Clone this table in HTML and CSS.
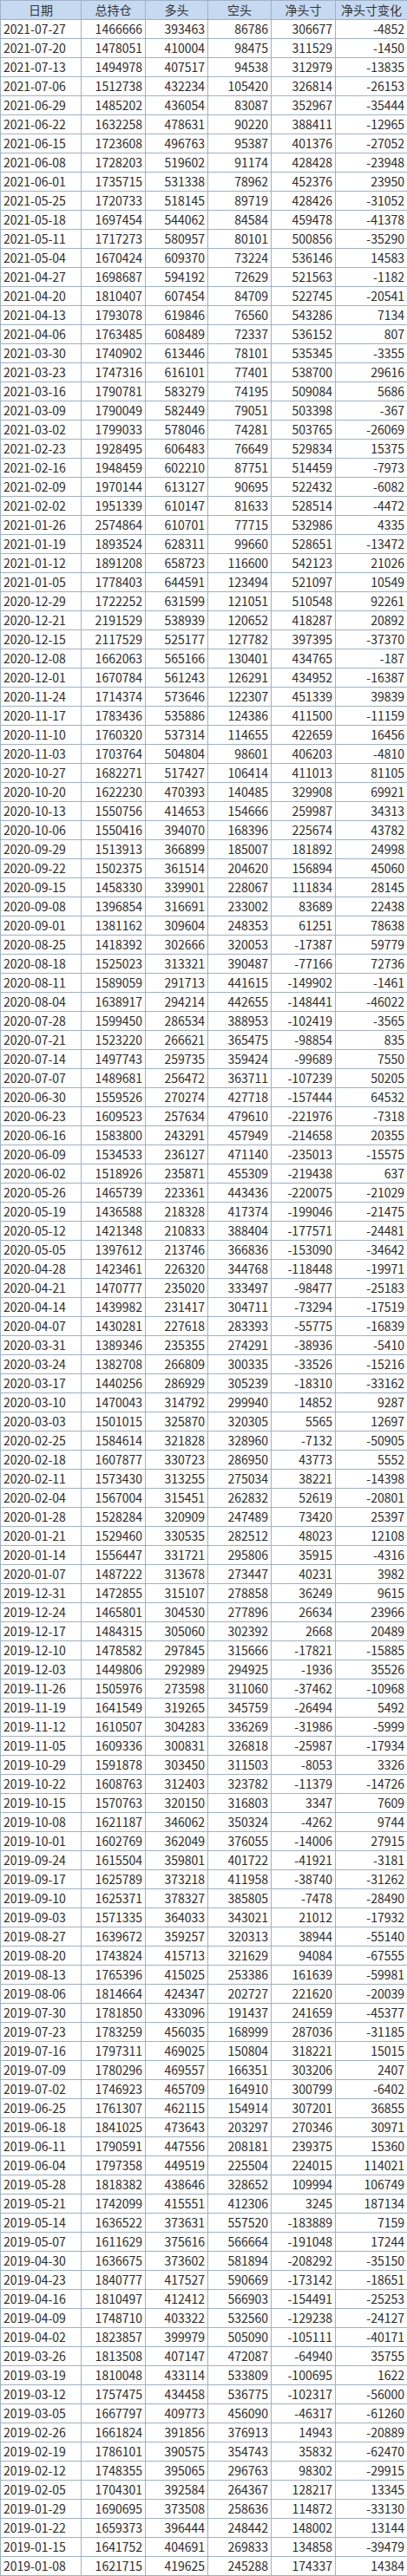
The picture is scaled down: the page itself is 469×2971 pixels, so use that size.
FILE: index.html
```html
<!DOCTYPE html>
<html lang="zh-CN">
<head>
<meta charset="utf-8">
<title>持仓数据</title>
<link rel="stylesheet" href="styles.css">
</head>
<body>
<table class="grid">
<colgroup>
<col class="c-date"><col class="c-total"><col class="c-long"><col class="c-short"><col class="c-net"><col class="c-chg">
</colgroup>
<thead>
<tr><th>日期</th><th>总持仓</th><th>多头</th><th>空头</th><th>净头寸</th><th>净头寸变化</th></tr>
</thead>
<tbody>
<tr><td>2021-07-27</td><td>1466666</td><td>393463</td><td>86786</td><td>306677</td><td>-4852</td></tr>
<tr><td>2021-07-20</td><td>1478051</td><td>410004</td><td>98475</td><td>311529</td><td>-1450</td></tr>
<tr><td>2021-07-13</td><td>1494978</td><td>407517</td><td>94538</td><td>312979</td><td>-13835</td></tr>
<tr><td>2021-07-06</td><td>1512738</td><td>432234</td><td>105420</td><td>326814</td><td>-26153</td></tr>
<tr><td>2021-06-29</td><td>1485202</td><td>436054</td><td>83087</td><td>352967</td><td>-35444</td></tr>
<tr><td>2021-06-22</td><td>1632258</td><td>478631</td><td>90220</td><td>388411</td><td>-12965</td></tr>
<tr><td>2021-06-15</td><td>1723608</td><td>496763</td><td>95387</td><td>401376</td><td>-27052</td></tr>
<tr><td>2021-06-08</td><td>1728203</td><td>519602</td><td>91174</td><td>428428</td><td>-23948</td></tr>
<tr><td>2021-06-01</td><td>1735715</td><td>531338</td><td>78962</td><td>452376</td><td>23950</td></tr>
<tr><td>2021-05-25</td><td>1720733</td><td>518145</td><td>89719</td><td>428426</td><td>-31052</td></tr>
<tr><td>2021-05-18</td><td>1697454</td><td>544062</td><td>84584</td><td>459478</td><td>-41378</td></tr>
<tr><td>2021-05-11</td><td>1717273</td><td>580957</td><td>80101</td><td>500856</td><td>-35290</td></tr>
<tr><td>2021-05-04</td><td>1670424</td><td>609370</td><td>73224</td><td>536146</td><td>14583</td></tr>
<tr><td>2021-04-27</td><td>1698687</td><td>594192</td><td>72629</td><td>521563</td><td>-1182</td></tr>
<tr><td>2021-04-20</td><td>1810407</td><td>607454</td><td>84709</td><td>522745</td><td>-20541</td></tr>
<tr><td>2021-04-13</td><td>1793078</td><td>619846</td><td>76560</td><td>543286</td><td>7134</td></tr>
<tr><td>2021-04-06</td><td>1763485</td><td>608489</td><td>72337</td><td>536152</td><td>807</td></tr>
<tr><td>2021-03-30</td><td>1740902</td><td>613446</td><td>78101</td><td>535345</td><td>-3355</td></tr>
<tr><td>2021-03-23</td><td>1747316</td><td>616101</td><td>77401</td><td>538700</td><td>29616</td></tr>
<tr><td>2021-03-16</td><td>1790781</td><td>583279</td><td>74195</td><td>509084</td><td>5686</td></tr>
<tr><td>2021-03-09</td><td>1790049</td><td>582449</td><td>79051</td><td>503398</td><td>-367</td></tr>
<tr><td>2021-03-02</td><td>1799033</td><td>578046</td><td>74281</td><td>503765</td><td>-26069</td></tr>
<tr><td>2021-02-23</td><td>1928495</td><td>606483</td><td>76649</td><td>529834</td><td>15375</td></tr>
<tr><td>2021-02-16</td><td>1948459</td><td>602210</td><td>87751</td><td>514459</td><td>-7973</td></tr>
<tr><td>2021-02-09</td><td>1970144</td><td>613127</td><td>90695</td><td>522432</td><td>-6082</td></tr>
<tr><td>2021-02-02</td><td>1951339</td><td>610147</td><td>81633</td><td>528514</td><td>-4472</td></tr>
<tr><td>2021-01-26</td><td>2574864</td><td>610701</td><td>77715</td><td>532986</td><td>4335</td></tr>
<tr><td>2021-01-19</td><td>1893524</td><td>628311</td><td>99660</td><td>528651</td><td>-13472</td></tr>
<tr><td>2021-01-12</td><td>1891208</td><td>658723</td><td>116600</td><td>542123</td><td>21026</td></tr>
<tr><td>2021-01-05</td><td>1778403</td><td>644591</td><td>123494</td><td>521097</td><td>10549</td></tr>
<tr><td>2020-12-29</td><td>1722252</td><td>631599</td><td>121051</td><td>510548</td><td>92261</td></tr>
<tr><td>2020-12-21</td><td>2191529</td><td>538939</td><td>120652</td><td>418287</td><td>20892</td></tr>
<tr><td>2020-12-15</td><td>2117529</td><td>525177</td><td>127782</td><td>397395</td><td>-37370</td></tr>
<tr><td>2020-12-08</td><td>1662063</td><td>565166</td><td>130401</td><td>434765</td><td>-187</td></tr>
<tr><td>2020-12-01</td><td>1670784</td><td>561243</td><td>126291</td><td>434952</td><td>-16387</td></tr>
<tr><td>2020-11-24</td><td>1714374</td><td>573646</td><td>122307</td><td>451339</td><td>39839</td></tr>
<tr><td>2020-11-17</td><td>1783436</td><td>535886</td><td>124386</td><td>411500</td><td>-11159</td></tr>
<tr><td>2020-11-10</td><td>1760320</td><td>537314</td><td>114655</td><td>422659</td><td>16456</td></tr>
<tr><td>2020-11-03</td><td>1703764</td><td>504804</td><td>98601</td><td>406203</td><td>-4810</td></tr>
<tr><td>2020-10-27</td><td>1682271</td><td>517427</td><td>106414</td><td>411013</td><td>81105</td></tr>
<tr><td>2020-10-20</td><td>1622230</td><td>470393</td><td>140485</td><td>329908</td><td>69921</td></tr>
<tr><td>2020-10-13</td><td>1550756</td><td>414653</td><td>154666</td><td>259987</td><td>34313</td></tr>
<tr><td>2020-10-06</td><td>1550416</td><td>394070</td><td>168396</td><td>225674</td><td>43782</td></tr>
<tr><td>2020-09-29</td><td>1513913</td><td>366899</td><td>185007</td><td>181892</td><td>24998</td></tr>
<tr><td>2020-09-22</td><td>1502375</td><td>361514</td><td>204620</td><td>156894</td><td>45060</td></tr>
<tr><td>2020-09-15</td><td>1458330</td><td>339901</td><td>228067</td><td>111834</td><td>28145</td></tr>
<tr><td>2020-09-08</td><td>1396854</td><td>316691</td><td>233002</td><td>83689</td><td>22438</td></tr>
<tr><td>2020-09-01</td><td>1381162</td><td>309604</td><td>248353</td><td>61251</td><td>78638</td></tr>
<tr><td>2020-08-25</td><td>1418392</td><td>302666</td><td>320053</td><td>-17387</td><td>59779</td></tr>
<tr><td>2020-08-18</td><td>1525023</td><td>313321</td><td>390487</td><td>-77166</td><td>72736</td></tr>
<tr><td>2020-08-11</td><td>1589059</td><td>291713</td><td>441615</td><td>-149902</td><td>-1461</td></tr>
<tr><td>2020-08-04</td><td>1638917</td><td>294214</td><td>442655</td><td>-148441</td><td>-46022</td></tr>
<tr><td>2020-07-28</td><td>1599450</td><td>286534</td><td>388953</td><td>-102419</td><td>-3565</td></tr>
<tr><td>2020-07-21</td><td>1523220</td><td>266621</td><td>365475</td><td>-98854</td><td>835</td></tr>
<tr><td>2020-07-14</td><td>1497743</td><td>259735</td><td>359424</td><td>-99689</td><td>7550</td></tr>
<tr><td>2020-07-07</td><td>1489681</td><td>256472</td><td>363711</td><td>-107239</td><td>50205</td></tr>
<tr><td>2020-06-30</td><td>1559526</td><td>270274</td><td>427718</td><td>-157444</td><td>64532</td></tr>
<tr><td>2020-06-23</td><td>1609523</td><td>257634</td><td>479610</td><td>-221976</td><td>-7318</td></tr>
<tr><td>2020-06-16</td><td>1583800</td><td>243291</td><td>457949</td><td>-214658</td><td>20355</td></tr>
<tr><td>2020-06-09</td><td>1534533</td><td>236127</td><td>471140</td><td>-235013</td><td>-15575</td></tr>
<tr><td>2020-06-02</td><td>1518926</td><td>235871</td><td>455309</td><td>-219438</td><td>637</td></tr>
<tr><td>2020-05-26</td><td>1465739</td><td>223361</td><td>443436</td><td>-220075</td><td>-21029</td></tr>
<tr><td>2020-05-19</td><td>1436588</td><td>218328</td><td>417374</td><td>-199046</td><td>-21475</td></tr>
<tr><td>2020-05-12</td><td>1421348</td><td>210833</td><td>388404</td><td>-177571</td><td>-24481</td></tr>
<tr><td>2020-05-05</td><td>1397612</td><td>213746</td><td>366836</td><td>-153090</td><td>-34642</td></tr>
<tr><td>2020-04-28</td><td>1423461</td><td>226320</td><td>344768</td><td>-118448</td><td>-19971</td></tr>
<tr><td>2020-04-21</td><td>1470777</td><td>235020</td><td>333497</td><td>-98477</td><td>-25183</td></tr>
<tr><td>2020-04-14</td><td>1439982</td><td>231417</td><td>304711</td><td>-73294</td><td>-17519</td></tr>
<tr><td>2020-04-07</td><td>1430281</td><td>227618</td><td>283393</td><td>-55775</td><td>-16839</td></tr>
<tr><td>2020-03-31</td><td>1389346</td><td>235355</td><td>274291</td><td>-38936</td><td>-5410</td></tr>
<tr><td>2020-03-24</td><td>1382708</td><td>266809</td><td>300335</td><td>-33526</td><td>-15216</td></tr>
<tr><td>2020-03-17</td><td>1440256</td><td>286929</td><td>305239</td><td>-18310</td><td>-33162</td></tr>
<tr><td>2020-03-10</td><td>1470043</td><td>314792</td><td>299940</td><td>14852</td><td>9287</td></tr>
<tr><td>2020-03-03</td><td>1501015</td><td>325870</td><td>320305</td><td>5565</td><td>12697</td></tr>
<tr><td>2020-02-25</td><td>1584614</td><td>321828</td><td>328960</td><td>-7132</td><td>-50905</td></tr>
<tr><td>2020-02-18</td><td>1607877</td><td>330723</td><td>286950</td><td>43773</td><td>5552</td></tr>
<tr><td>2020-02-11</td><td>1573430</td><td>313255</td><td>275034</td><td>38221</td><td>-14398</td></tr>
<tr><td>2020-02-04</td><td>1567004</td><td>315451</td><td>262832</td><td>52619</td><td>-20801</td></tr>
<tr><td>2020-01-28</td><td>1528284</td><td>320909</td><td>247489</td><td>73420</td><td>25397</td></tr>
<tr><td>2020-01-21</td><td>1529460</td><td>330535</td><td>282512</td><td>48023</td><td>12108</td></tr>
<tr><td>2020-01-14</td><td>1556447</td><td>331721</td><td>295806</td><td>35915</td><td>-4316</td></tr>
<tr><td>2020-01-07</td><td>1487222</td><td>313678</td><td>273447</td><td>40231</td><td>3982</td></tr>
<tr><td>2019-12-31</td><td>1472855</td><td>315107</td><td>278858</td><td>36249</td><td>9615</td></tr>
<tr><td>2019-12-24</td><td>1465801</td><td>304530</td><td>277896</td><td>26634</td><td>23966</td></tr>
<tr><td>2019-12-17</td><td>1484315</td><td>305060</td><td>302392</td><td>2668</td><td>20489</td></tr>
<tr><td>2019-12-10</td><td>1478582</td><td>297845</td><td>315666</td><td>-17821</td><td>-15885</td></tr>
<tr><td>2019-12-03</td><td>1449806</td><td>292989</td><td>294925</td><td>-1936</td><td>35526</td></tr>
<tr><td>2019-11-26</td><td>1505976</td><td>273598</td><td>311060</td><td>-37462</td><td>-10968</td></tr>
<tr><td>2019-11-19</td><td>1641549</td><td>319265</td><td>345759</td><td>-26494</td><td>5492</td></tr>
<tr><td>2019-11-12</td><td>1610507</td><td>304283</td><td>336269</td><td>-31986</td><td>-5999</td></tr>
<tr><td>2019-11-05</td><td>1609336</td><td>300831</td><td>326818</td><td>-25987</td><td>-17934</td></tr>
<tr><td>2019-10-29</td><td>1591878</td><td>303450</td><td>311503</td><td>-8053</td><td>3326</td></tr>
<tr><td>2019-10-22</td><td>1608763</td><td>312403</td><td>323782</td><td>-11379</td><td>-14726</td></tr>
<tr><td>2019-10-15</td><td>1570763</td><td>320150</td><td>316803</td><td>3347</td><td>7609</td></tr>
<tr><td>2019-10-08</td><td>1621187</td><td>346062</td><td>350324</td><td>-4262</td><td>9744</td></tr>
<tr><td>2019-10-01</td><td>1602769</td><td>362049</td><td>376055</td><td>-14006</td><td>27915</td></tr>
<tr><td>2019-09-24</td><td>1615504</td><td>359801</td><td>401722</td><td>-41921</td><td>-3181</td></tr>
<tr><td>2019-09-17</td><td>1625789</td><td>373218</td><td>411958</td><td>-38740</td><td>-31262</td></tr>
<tr><td>2019-09-10</td><td>1625371</td><td>378327</td><td>385805</td><td>-7478</td><td>-28490</td></tr>
<tr><td>2019-09-03</td><td>1571335</td><td>364033</td><td>343021</td><td>21012</td><td>-17932</td></tr>
<tr><td>2019-08-27</td><td>1639672</td><td>359257</td><td>320313</td><td>38944</td><td>-55140</td></tr>
<tr><td>2019-08-20</td><td>1743824</td><td>415713</td><td>321629</td><td>94084</td><td>-67555</td></tr>
<tr><td>2019-08-13</td><td>1765396</td><td>415025</td><td>253386</td><td>161639</td><td>-59981</td></tr>
<tr><td>2019-08-06</td><td>1814664</td><td>424347</td><td>202727</td><td>221620</td><td>-20039</td></tr>
<tr><td>2019-07-30</td><td>1781850</td><td>433096</td><td>191437</td><td>241659</td><td>-45377</td></tr>
<tr><td>2019-07-23</td><td>1783259</td><td>456035</td><td>168999</td><td>287036</td><td>-31185</td></tr>
<tr><td>2019-07-16</td><td>1797311</td><td>469025</td><td>150804</td><td>318221</td><td>15015</td></tr>
<tr><td>2019-07-09</td><td>1780296</td><td>469557</td><td>166351</td><td>303206</td><td>2407</td></tr>
<tr><td>2019-07-02</td><td>1746923</td><td>465709</td><td>164910</td><td>300799</td><td>-6402</td></tr>
<tr><td>2019-06-25</td><td>1761307</td><td>462115</td><td>154914</td><td>307201</td><td>36855</td></tr>
<tr><td>2019-06-18</td><td>1841025</td><td>473643</td><td>203297</td><td>270346</td><td>30971</td></tr>
<tr><td>2019-06-11</td><td>1790591</td><td>447556</td><td>208181</td><td>239375</td><td>15360</td></tr>
<tr><td>2019-06-04</td><td>1797358</td><td>449519</td><td>225504</td><td>224015</td><td>114021</td></tr>
<tr><td>2019-05-28</td><td>1818382</td><td>438646</td><td>328652</td><td>109994</td><td>106749</td></tr>
<tr><td>2019-05-21</td><td>1742099</td><td>415551</td><td>412306</td><td>3245</td><td>187134</td></tr>
<tr><td>2019-05-14</td><td>1636522</td><td>373631</td><td>557520</td><td>-183889</td><td>7159</td></tr>
<tr><td>2019-05-07</td><td>1611629</td><td>375616</td><td>566664</td><td>-191048</td><td>17244</td></tr>
<tr><td>2019-04-30</td><td>1636675</td><td>373602</td><td>581894</td><td>-208292</td><td>-35150</td></tr>
<tr><td>2019-04-23</td><td>1840777</td><td>417527</td><td>590669</td><td>-173142</td><td>-18651</td></tr>
<tr><td>2019-04-16</td><td>1810497</td><td>412412</td><td>566903</td><td>-154491</td><td>-25253</td></tr>
<tr><td>2019-04-09</td><td>1748710</td><td>403322</td><td>532560</td><td>-129238</td><td>-24127</td></tr>
<tr><td>2019-04-02</td><td>1823857</td><td>399979</td><td>505090</td><td>-105111</td><td>-40171</td></tr>
<tr><td>2019-03-26</td><td>1813508</td><td>407147</td><td>472087</td><td>-64940</td><td>35755</td></tr>
<tr><td>2019-03-19</td><td>1810048</td><td>433114</td><td>533809</td><td>-100695</td><td>1622</td></tr>
<tr><td>2019-03-12</td><td>1757475</td><td>434458</td><td>536775</td><td>-102317</td><td>-56000</td></tr>
<tr><td>2019-03-05</td><td>1667797</td><td>409773</td><td>456090</td><td>-46317</td><td>-61260</td></tr>
<tr><td>2019-02-26</td><td>1661824</td><td>391856</td><td>376913</td><td>14943</td><td>-20889</td></tr>
<tr><td>2019-02-19</td><td>1786101</td><td>390575</td><td>354743</td><td>35832</td><td>-62470</td></tr>
<tr><td>2019-02-12</td><td>1748355</td><td>395065</td><td>296763</td><td>98302</td><td>-29915</td></tr>
<tr><td>2019-02-05</td><td>1704301</td><td>392584</td><td>264367</td><td>128217</td><td>13345</td></tr>
<tr><td>2019-01-29</td><td>1690695</td><td>373508</td><td>258636</td><td>114872</td><td>-33130</td></tr>
<tr><td>2019-01-22</td><td>1659373</td><td>396444</td><td>248442</td><td>148002</td><td>13144</td></tr>
<tr><td>2019-01-15</td><td>1641752</td><td>404691</td><td>269833</td><td>134858</td><td>-39479</td></tr>
<tr><td>2019-01-08</td><td>1621715</td><td>419625</td><td>245288</td><td>174337</td><td>14384</td></tr>
</tbody>
</table>
</body>
</html>
```

FILE: styles.css
```css
html, body {
  margin: 0;
  padding: 0;
  background: #ffffff;
}

.grid {
  width: 469px;
  table-layout: fixed;
  border-collapse: separate;
  border-spacing: 0;
  border-left: 1px solid #9fb1c6;
  border-top: 1px solid #9fb1c6;
  font-family: "Noto Sans CJK SC", "Noto Sans", sans-serif;
  font-size: 14px;
  color: #2b2b2b;
}

.c-date { width: 93px; }
.c-total { width: 74px; }
.c-long { width: 72px; }
.c-short { width: 73px; }
.c-net { width: 74px; }
.c-chg { width: 83px; }

.grid tr {
  height: 22px;
}

.grid th,
.grid td {
  padding: 0 3px;
  height: 22px;
  line-height: 21px;
  border-right: 1px solid #9fb1c6;
  border-bottom: 1px solid #9fb1c6;
  white-space: nowrap;
  overflow: hidden;
  box-sizing: border-box;
  vertical-align: middle;
}

.grid th {
  background: #c5d9f1;
  font-weight: normal;
  text-align: center;
  color: #333333;
}

.grid td {
  text-align: right;
}

.grid td:first-child {
  text-align: left;
}
```
